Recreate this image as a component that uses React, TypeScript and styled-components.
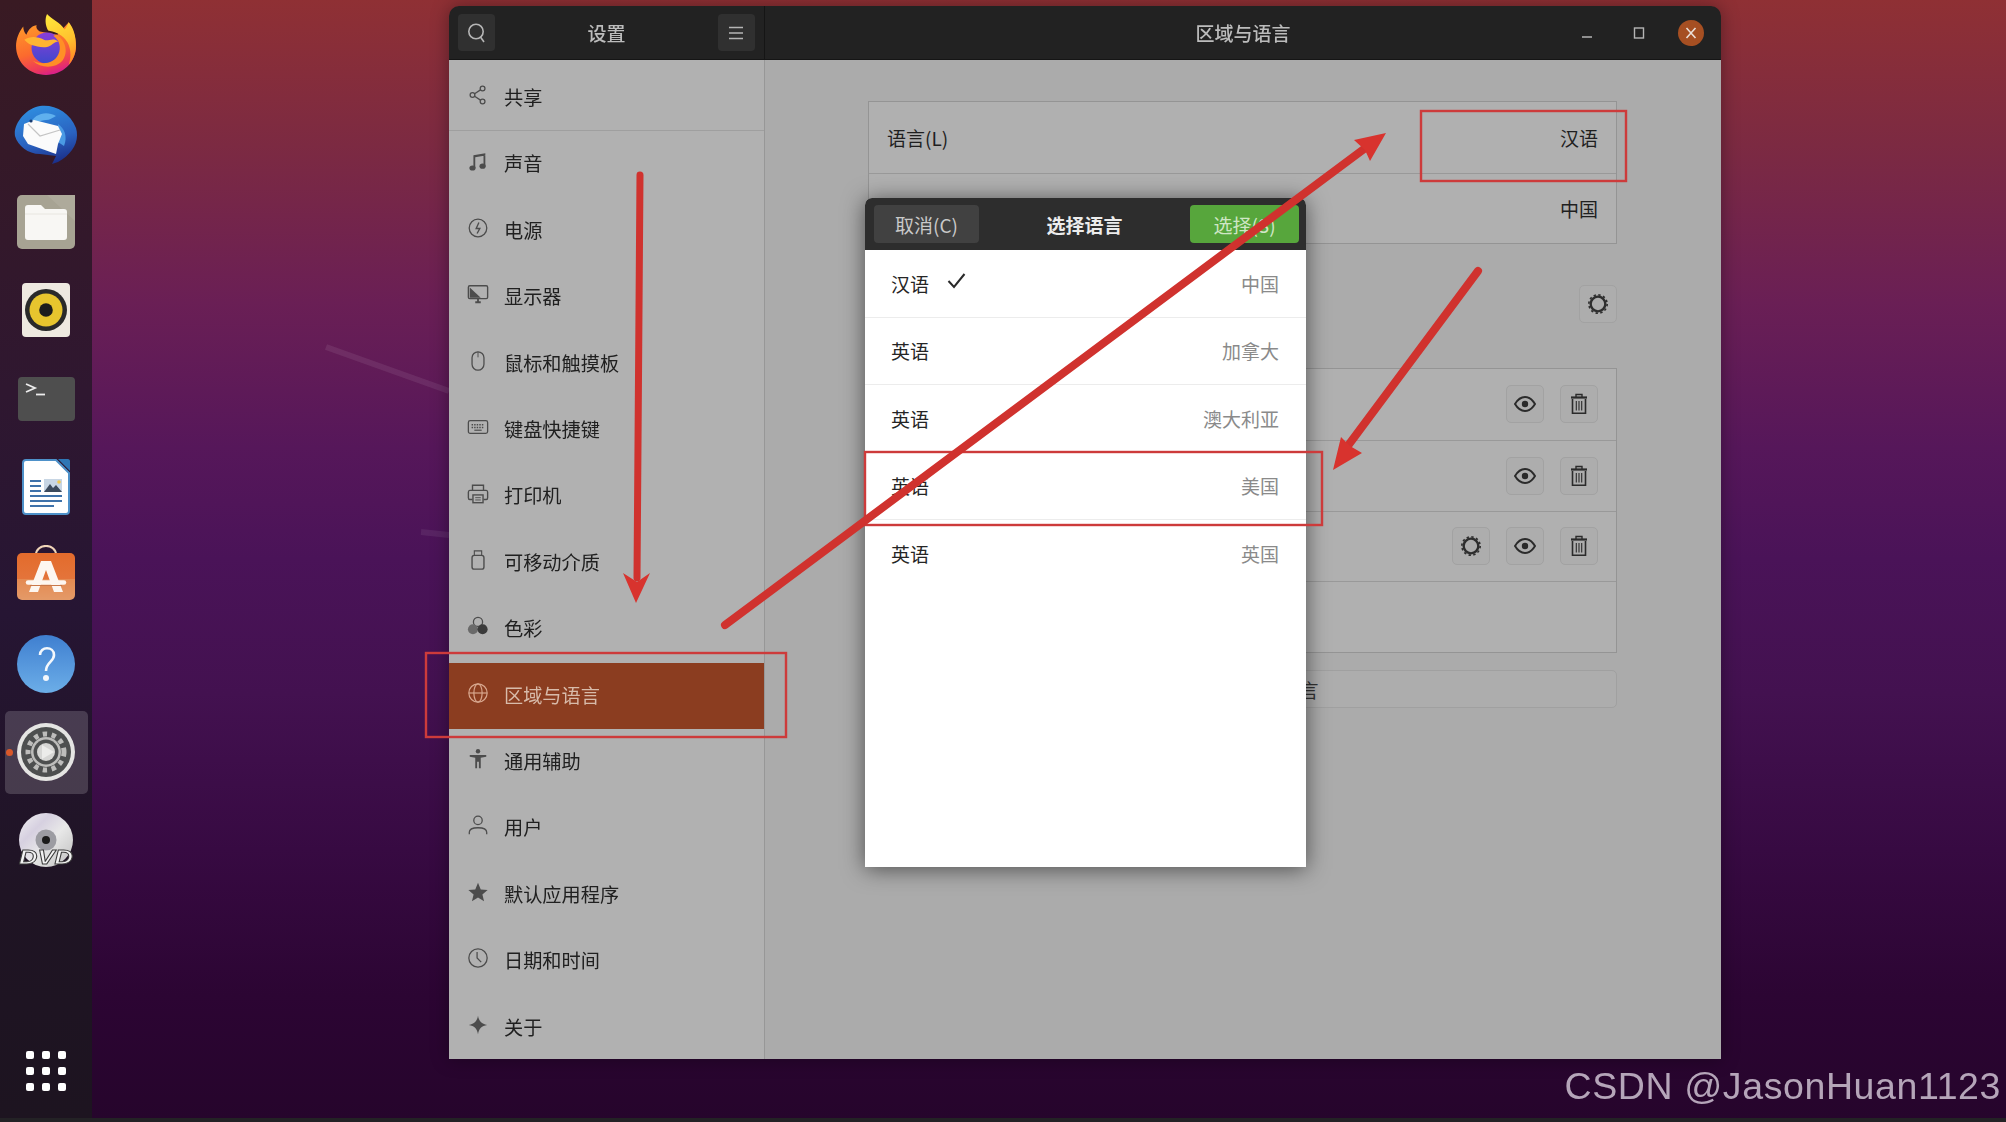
import React from "react";
import styled, { createGlobalStyle } from "styled-components";

const Global = createGlobalStyle`
  html, body { margin: 0; padding: 0; width: 2006px; height: 1122px; overflow: hidden; background: #222; }
  * { box-sizing: border-box; }
  body { font-family: "Noto Sans CJK SC", "Noto Sans", sans-serif; }
`;

const Page = styled.div`
  position: relative;
  width: 2006px;
  height: 1122px;
  display: grid;
  grid-template-rows: 1118px 4px;
  overflow: hidden;
`;
const Desktop = styled.div`
  display: flex;
  background: linear-gradient(180deg, #8f3034 0%, #7c2a42 13%, #6a1f55 27%, #56175a 40%, #4a1358 50%, #431150 62%, #370a42 76%, #2c0533 89%, #26052c 100%);
`;
const Strip = styled.div`
  background: #232225;
`;
const Dock = styled.nav`
  width: 92px;
  height: 100%;
  flex: none;
  display: flex;
  flex-direction: column;
  align-items: center;
  padding: 1px 0 27px;
  background: linear-gradient(180deg, #391a23 0%, #2f1730 35%, #261533 55%, #1f1424 80%, #1d1420 100%);
  filter: blur(0.4px);
`;
const Slot = styled.div<{ $active?: boolean }>`
  position: relative;
  width: 83px;
  height: 88.4px;
  flex: none;
  display: flex;
  align-items: center;
  justify-content: center;
  &::before {
    content: "";
    display: ${(p) => (p.$active ? "block" : "none")};
    position: absolute;
    inset: 3px 0;
    border-radius: 5px;
    background: rgba(255, 255, 255, 0.17);
  }
  &::after {
    content: "";
    display: ${(p) => (p.$active ? "block" : "none")};
    position: absolute;
    left: 1px;
    top: 41px;
    width: 7px;
    height: 7px;
    border-radius: 50%;
    background: #d9582a;
  }
  svg { position: relative; z-index: 1; }
`;
const AppGrid = styled.div`
  margin-top: auto;
  display: grid;
  grid-template-columns: repeat(3, 8px);
  gap: 8px;
`;
const AppDot = styled.span`
  width: 8px;
  height: 8px;
  border-radius: 2px;
  background: #fff;
`;
const Stage = styled.div`
  flex: 1;
  min-width: 0;
  display: flex;
  padding: 6px 285px 59px 357px;
`;
const Window = styled.section`
  position: relative;
  flex: 1;
  min-width: 0;
  display: flex;
  flex-direction: column;
  border-radius: 10px 10px 0 0;
  overflow: hidden;
  box-shadow: 0 0 18px rgba(0, 0, 0, 0.35);
  filter: blur(0.4px);
`;
const TitleBar = styled.header`
  height: 54px;
  flex: none;
  display: flex;
  background: #222222;
  border-bottom: 1px solid #151515;
  color: #b9b9b9;
`;
const SideHead = styled.div`
  width: 316px;
  flex: none;
  display: flex;
  align-items: center;
  justify-content: space-between;
  padding: 0 9px;
  border-right: 1px solid #151515;
`;
const HeadButton = styled.button`
  width: 37px;
  height: 37px;
  padding: 0;
  border: 0;
  border-radius: 4px;
  background: #303030;
  display: flex;
  align-items: center;
  justify-content: center;
`;
const TitleText = styled.span`
  font-size: 19px;
  font-weight: 500;
  line-height: 1;
  color: #bcbcbc;
  white-space: nowrap;
`;
const MainHead = styled.div`
  position: relative;
  flex: 1;
  min-width: 0;
  display: flex;
  align-items: center;
  justify-content: center;
`;
const WinControls = styled.div`
  position: absolute;
  right: 17px;
  top: 14px;
  display: flex;
  align-items: center;
  gap: 26px;
`;
const WinControl = styled.span<{ $close?: boolean }>`
  width: 26px;
  height: 26px;
  border-radius: 50%;
  display: flex;
  align-items: center;
  justify-content: center;
  background: ${(p) => (p.$close ? "#a64f22" : "transparent")};
`;
const Body = styled.div`
  flex: 1;
  display: flex;
  min-height: 0;
`;
const Sidebar = styled.aside`
  width: 316px;
  flex: none;
  padding-top: 5px;
  background: #b1b1b1;
  border-right: 1px solid #979797;
  overflow: hidden;
`;
const SideRow = styled.div<{ $selected?: boolean; $divider?: boolean }>`
  height: 66.4px;
  display: flex;
  align-items: center;
  gap: 15px;
  padding-left: 18px;
  font-size: 19.2px;
  line-height: 1;
  color: ${(p) => (p.$selected ? "#d8bbaa" : "#202020")};
  background: ${(p) => (p.$selected ? "#8b3d20" : "transparent")};
  border-bottom: 1px solid ${(p) => (p.$divider ? "#9f9f9f" : "transparent")};
`;
const SideIcon = styled.span<{ $selected?: boolean }>`
  width: 22px;
  height: 22px;
  flex: none;
  margin-top: -5px;
  color: ${(p) => (p.$selected ? "#d8a78e" : "#4c4c4c")};
  svg { display: block; width: 22px; height: 22px; }
`;
const Main = styled.main`
  position: relative;
  flex: 1;
  min-width: 0;
  padding: 41px 104px 0 103px;
  background: #ababab;
`;
const Panel = styled.div`
  background: #b0b0b0;
  border: 1px solid #949494;
`;
const FormRow = styled.div`
  height: 70.5px;
  display: flex;
  align-items: center;
  justify-content: space-between;
  padding: 0 18px;
  font-size: 19px;
  line-height: 1;
  color: #1f1f1f;
  & + & { border-top: 1px solid #999999; }
`;
const ActionRow = styled.div`
  height: 70.75px;
  display: flex;
  align-items: center;
  justify-content: flex-end;
  gap: 16px;
  padding-right: 18px;
  & + & { border-top: 1px solid #999999; }
`;
const IconButton = styled.button`
  width: 38px;
  height: 38px;
  padding: 0;
  border: 1px solid #a2a2a2;
  border-radius: 5px;
  background: #adadad;
  display: flex;
  align-items: center;
  justify-content: center;
  color: #2e2e2e;
`;
const GearRow = styled.div`
  display: flex;
  justify-content: flex-end;
  margin: 41px 0 45px;
`;
const ManageButton = styled.button`
  display: block;
  width: 100%;
  height: 38px;
  margin-top: 17px;
  border: 1px solid #a0a0a0;
  border-radius: 5px;
  background: #adadad;
  font: inherit;
  font-size: 19px;
  line-height: 1;
  color: #333;
`;
const Dialog = styled.div`
  position: absolute;
  left: 100px;
  top: 138px;
  width: 441px;
  height: 669px;
  display: flex;
  flex-direction: column;
  background: #fff;
  border-radius: 7px 7px 0 0;
  box-shadow: 0 2px 22px rgba(0, 0, 0, 0.55);
  overflow: hidden;
`;
const DialogHead = styled.div`
  height: 52px;
  flex: none;
  display: flex;
  align-items: center;
  justify-content: space-between;
  padding: 0 7px 0 9px;
  background: #2d2d2d;
`;
const DialogButton = styled.button<{ $primary?: boolean }>`
  width: ${(p) => (p.$primary ? "109px" : "105px")};
  height: 38px;
  padding: 0;
  border: 0;
  border-radius: 4px;
  font: inherit;
  font-size: 19px;
  line-height: 1;
  color: ${(p) => (p.$primary ? "#cfe6c5" : "#c9c9c9")};
  background: ${(p) => (p.$primary ? "#57a63c" : "#414141")};
`;
const DialogTitle = styled.span`
  font-size: 19px;
  font-weight: 700;
  line-height: 1;
  color: #ececec;
`;
const LangRow = styled.div<{ $plain?: boolean }>`
  height: 67.5px;
  flex: none;
  display: flex;
  align-items: center;
  padding: 0 27px 0 26px;
  font-size: 19px;
  line-height: 1;
  color: #252525;
  border-bottom: 1px solid ${(p) => (p.$plain ? "transparent" : "#ececec")};
`;
const Region = styled.span`
  margin-left: auto;
  color: #8a8a8a;
`;
const Check = styled.span`
  margin-left: 18px;
  margin-top: -4px;
  height: 20px;
  color: #2a2a2a;
`;
const Overlay = styled.svg`
  position: absolute;
  left: 0;
  top: 0;
  z-index: 10;
  pointer-events: none;
`;
const Watermark = styled.div`
  position: absolute;
  right: 5px;
  top: 1064px;
  z-index: 11;
  font-family: "Liberation Sans", Arial, sans-serif;
  font-size: 37.5px;
  line-height: 44px;
  letter-spacing: 0.6px;
  color: #b5a5b9;
  white-space: nowrap;
`;
const Streaks = styled.svg`
  position: absolute;
  left: 0;
  top: 0;
  z-index: 0;
  pointer-events: none;
`;
const Layer = styled.div`
  position: relative;
  z-index: 1;
  display: flex;
  width: 100%;
  min-width: 0;
`;
const RaisedIcon = styled.svg`
  margin-top: -7px;
`;

const Firefox = () => (
  <svg width="60" height="62" viewBox="0 0 58 60">
    <defs>
      <linearGradient id="ffb" x1="0.2" y1="0" x2="0.55" y2="1">
        <stop offset="0" stopColor="#ff9a2a" />
        <stop offset="0.55" stopColor="#fb6a2e" />
        <stop offset="0.85" stopColor="#ee3a5a" />
        <stop offset="1" stopColor="#d8208a" />
      </linearGradient>
      <linearGradient id="ffy" x1="0.3" y1="0" x2="0.6" y2="1">
        <stop offset="0" stopColor="#ffe53a" />
        <stop offset="0.6" stopColor="#ffc02e" />
        <stop offset="1" stopColor="#ff8a24" />
      </linearGradient>
      <linearGradient id="ffp" x1="0.5" y1="0" x2="0.5" y2="1">
        <stop offset="0" stopColor="#8a3ed8" />
        <stop offset="1" stopColor="#3f48cc" />
      </linearGradient>
    </defs>
    <path d="M29 59C13 59 0 47 0 31C0 24 3 17 7 12C7 15 8 18 10 20C12 15 16 11 20 11C19 13 20 15 23 17L40 20L51 8C55 14 58 22 58 31C58 47 45 59 29 59Z" fill="url(#ffb)" />
    <path d="M30 0C34 5 43 8 47 15C49 13 50 10 51 8C56 14 58 22 58 31C58 38 55 45 51 49C54 41 53 31 48 25C44 19 36 17 31 16C28 10 28 4 30 0Z" fill="url(#ffy)" />
    <circle cx="30" cy="33" r="15" fill="url(#ffp)" />
    <path d="M39 20C48 25 51 37 45 45C38 53 24 53 16 45C25 50 37 48 41 39C44 32 42 25 36 21Z" fill="#ff8f26" />
    <path d="M8 25C14 21 21 22 27 25C31 27 36 22 41 27C37 26 35 31 30 32C24 33 20 31 15 30C12 29 10 27 8 25Z" fill="#ffb432" />
  </svg>
);
const Thunderbird = () => (
  <svg width="64" height="60" viewBox="0 0 64 60">
    <defs>
      <linearGradient id="tb" x1="0.3" y1="0" x2="0.6" y2="1">
        <stop offset="0" stopColor="#2f8ee0" />
        <stop offset="0.6" stopColor="#2a62c0" />
        <stop offset="1" stopColor="#1b2f8a" />
      </linearGradient>
    </defs>
    <path d="M26 2C40 0 56 8 62 24C66 38 58 50 44 58L38 60L42 52L26 50C14 50 4 42 1 32C-1 20 12 4 26 2Z" fill="url(#tb)" />
    <path d="M16 20C20 10 32 6 42 12C38 14 36 16 32 16C26 16 20 20 16 20Z" fill="#5fb0ee" />
    <path d="M44 20C50 24 54 32 50 42L44 38Z" fill="#4a9ae4" />
    <path d="M9 32L10 20L20 16L44 22L48 30L44 40L42 50L14 40Z" fill="#fbfbfb" />
    <path d="M14 20L26 32L46 26" fill="none" stroke="#c4c4c4" strokeWidth="1.2" />
    <circle cx="17" cy="17" r="1.6" fill="#173a70" />
  </svg>
);
const Files = () => (
  <svg width="58" height="54" viewBox="0 0 58 54">
    <rect width="58" height="54" rx="5" fill="#a7a393" />
    <path d="M30 0H58V26Z" fill="#aeaa9b" />
    <path d="M8 13C8 11 9 10 11 10H24L28 14H47C49 14 50 15 50 17V42C50 44 49 45 47 45H11C9 45 8 44 8 42Z" fill="#f8f7f4" />
    <path d="M8 19H50" stroke="#e8e6e0" strokeWidth="1" />
  </svg>
);
const Rhythmbox = () => (
  <svg width="48" height="54" viewBox="0 0 48 54">
    <rect width="48" height="54" rx="4" fill="#eee9e0" />
    <circle cx="24" cy="27" r="21" fill="#2a2a2a" />
    <circle cx="24" cy="27" r="16.5" fill="#e7c52e" />
    <circle cx="24" cy="27" r="6.8" fill="#1d1d1d" />
  </svg>
);
const Terminal = () => (
  <svg width="57" height="44" viewBox="0 0 57 44">
    <rect width="57" height="44" rx="4" fill="#4e4e4e" />
    <path d="M8 7L17 11L8 15" fill="none" stroke="#ececec" strokeWidth="1.8" />
    <path d="M18 17.5H27" stroke="#ececec" strokeWidth="1.8" />
  </svg>
);
const Writer = () => (
  <svg width="48" height="56" viewBox="0 0 48 56">
    <path d="M36 0H46C47 0 48 1 48 2V12Z" fill="#2e76b5" />
    <path d="M4 1H34L47 14V52C47 54 46 55 44 55H4C2 55 1 54 1 52V4C1 2 2 1 4 1Z" fill="#fff" stroke="#4e91c9" strokeWidth="2" />
    <g stroke="#3e72aa" strokeWidth="2">
      <path d="M8 22H19M8 27H19M8 32H19M8 37H40M8 42H40M8 47H32" />
    </g>
    <rect x="22" y="20" width="18" height="13" fill="#c8d6e4" />
    <path d="M22 33L28 25L31 29L34 26L40 33Z" fill="#3c4a5c" />
    <circle cx="37" cy="23" r="1.8" fill="#f0c850" />
  </svg>
);
const AppStore = () => (
  <RaisedIcon width="58" height="55" viewBox="0 0 58 55">
    <defs>
      <linearGradient id="as" x1="0" y1="0" x2="0" y2="1">
        <stop offset="0" stopColor="#e36b2c" />
        <stop offset="0.55" stopColor="#e4743a" />
        <stop offset="0.56" stopColor="#e48a52" />
        <stop offset="1" stopColor="#e49a68" />
      </linearGradient>
    </defs>
    <path d="M19 10C19 -2 39 -2 39 10" fill="none" stroke="#f0d5b8" strokeWidth="2.2" />
    <rect y="8" width="58" height="47" rx="5" fill="url(#as)" />
    <path d="M24 16H34L46 47H37L29 25L21 47H12Z" fill="#fdf6f0" />
    <path d="M11 37.5H47" stroke="#fdf6f0" strokeWidth="4.5" strokeLinecap="round" />
    <path d="M13 40.5H45" stroke="#c9784a" strokeWidth="1" />
  </RaisedIcon>
);
const Help = () => (
  <svg width="58" height="58" viewBox="0 0 58 58">
    <defs>
      <linearGradient id="hp" x1="0" y1="0" x2="0" y2="1">
        <stop offset="0" stopColor="#3f7fd0" />
        <stop offset="1" stopColor="#6caee8" />
      </linearGradient>
    </defs>
    <circle cx="29" cy="29" r="29" fill="url(#hp)" />
    <path d="M23 20C23 11 37 11 37 20C37 27 29 27 29 36" fill="none" stroke="#f4f8fc" strokeWidth="2.6" />
    <circle cx="29" cy="43" r="3" fill="#f4f8fc" />
  </svg>
);
const SettingsLogo = () => (
  <svg width="58" height="58" viewBox="0 0 58 58">
    <circle cx="29" cy="29" r="29" fill="#e5e5e3" />
    <circle cx="29" cy="29" r="25" fill="#4d4f4f" />
    <circle cx="29" cy="29" r="18" fill="none" stroke="#bdbdbb" strokeWidth="5" strokeDasharray="4.4 4.6" />
    <circle cx="29" cy="29" r="15" fill="#bdbdbb" />
    <circle cx="29" cy="29" r="12.5" fill="#4d4f4f" />
    <circle cx="29" cy="29" r="9" fill="#d6d6d4" />
    <path d="M25 22L37 29L25 36Z" fill="#ececea" />
  </svg>
);
const Dvd = () => (
  <svg width="60" height="56" viewBox="0 0 60 56">
    <defs>
      <linearGradient id="dv" x1="0" y1="0" x2="1" y2="1">
        <stop offset="0" stopColor="#f2f2f2" />
        <stop offset="0.3" stopColor="#d6d0e0" />
        <stop offset="0.55" stopColor="#e8e8e8" />
        <stop offset="1" stopColor="#bdbdbd" />
      </linearGradient>
    </defs>
    <circle cx="30" cy="27" r="27" fill="url(#dv)" />
    <circle cx="30" cy="27" r="10.5" fill="#9c9ca2" />
    <circle cx="30" cy="27" r="4" fill="#1b1b1b" />
    <text x="3" y="51" fontFamily="'Liberation Sans', sans-serif" fontStyle="italic" fontWeight="700" fontSize="21" fill="#f2f2f2" stroke="#3a3a3a" strokeWidth="0.9" textLength="54" lengthAdjust="spacingAndGlyphs">DVD</text>
  </svg>
);

const Gear = ({ size = 22 }: { size?: number }) => (
  <svg width={size} height={size} viewBox="0 0 24 24" fill="none" stroke="currentColor">
    <circle cx="12" cy="12" r="8" strokeWidth="2.6" />
    <circle cx="12" cy="12" r="10" strokeWidth="1.8" strokeDasharray="2.6 2.64" />
  </svg>
);
const Eye = () => (
  <svg width="22" height="16" viewBox="0 0 22 16">
    <path d="M1 8C4 3 7 1 11 1C15 1 18 3 21 8C18 13 15 15 11 15C7 15 4 13 1 8Z" fill="none" stroke="#2b2b2b" strokeWidth="2" />
    <circle cx="11" cy="8" r="3.2" fill="#2b2b2b" />
  </svg>
);
const Trash = () => (
  <svg width="18" height="22" viewBox="0 0 18 22" fill="none" stroke="#2b2b2b">
    <path d="M1 4.5H17" strokeWidth="2.2" />
    <path d="M6 4V1.5H12V4" strokeWidth="1.4" />
    <path d="M2.5 6V20.2H15.5V6" strokeWidth="1.6" />
    <path d="M6.3 8V17.5M9 8V17.5M11.7 8V17.5" strokeWidth="1.1" />
  </svg>
);

const icons: Record<string, React.ReactNode> = {
  share: (
    <svg viewBox="0 0 24 24" fill="none" stroke="currentColor" strokeWidth="1.4">
      <circle cx="6" cy="12" r="2.6" /><circle cx="17" cy="5" r="2.6" /><circle cx="17" cy="19" r="2.6" />
      <path d="M8.3 10.7L14.7 6.4M8.3 13.3L14.7 17.6" />
    </svg>
  ),
  music: (
    <svg viewBox="0 0 24 24" fill="currentColor">
      <path d="M7 4.5L20 2.5V5L9 6.7V18.5H7ZM18 4H20V16.5H18Z" />
      <ellipse cx="6" cy="18.5" rx="3.4" ry="2.8" /><ellipse cx="17" cy="16.5" rx="3.4" ry="2.8" />
    </svg>
  ),
  power: (
    <svg viewBox="0 0 24 24" fill="none" stroke="currentColor" strokeWidth="1.4">
      <circle cx="12" cy="12" r="9.6" />
      <path d="M13 6L10 12.5H14L11 18" fill="none" strokeWidth="1.5" />
    </svg>
  ),
  display: (
    <svg viewBox="0 0 24 24" fill="none" stroke="currentColor" strokeWidth="1.5">
      <rect x="1.5" y="3" width="21" height="14" rx="1.5" />
      <path d="M3 5L15 16H3Z" fill="currentColor" stroke="none" />
      <path d="M9 21H15M12 17V21" strokeWidth="2" />
    </svg>
  ),
  mouse: (
    <svg viewBox="0 0 24 24" fill="none" stroke="currentColor" strokeWidth="1.4">
      <rect x="5.5" y="2" width="13" height="20" rx="6.5" />
      <path d="M12 2V8" strokeWidth="1" />
    </svg>
  ),
  keyboard: (
    <svg viewBox="0 0 24 24" fill="none" stroke="currentColor" strokeWidth="1.4">
      <rect x="1.5" y="5" width="21" height="14" rx="2" />
      <path d="M5 9.5H19M5 12.5H19" strokeWidth="1.5" strokeDasharray="1.6 1.2" />
      <path d="M8 15.5H16" strokeWidth="1.3" />
    </svg>
  ),
  printer: (
    <svg viewBox="0 0 24 24" fill="none" stroke="currentColor" strokeWidth="1.5">
      <path d="M6 8V2.5H18V8" />
      <path d="M6 18H3C2 18 1.5 17 1.5 16V10C1.5 9 2 8 3 8H21C22 8 22.5 9 22.5 10V16C22.5 17 22 18 21 18H18" />
      <rect x="6.5" y="13" width="11" height="8.5" />
      <path d="M9 16H15M9 18.5H15" strokeWidth="1" />
    </svg>
  ),
  usb: (
    <svg viewBox="0 0 24 24" fill="none" stroke="currentColor" strokeWidth="1.5">
      <rect x="5.5" y="7" width="13" height="15" rx="2.5" />
      <path d="M8 7V2H16V7" strokeWidth="1.2" />
    </svg>
  ),
  color: (
    <svg viewBox="0 0 24 24">
      <circle cx="12" cy="7.5" r="5" fill="none" stroke="currentColor" strokeWidth="1.4" />
      <circle cx="6.5" cy="15.5" r="5.5" fill="#6a6a6a" />
      <circle cx="17" cy="15.5" r="5.5" fill="#3b3b3b" />
    </svg>
  ),
  globe: (
    <svg viewBox="0 0 24 24" fill="none" stroke="currentColor" strokeWidth="1.3">
      <circle cx="12" cy="12" r="10" />
      <ellipse cx="12" cy="12" rx="4.5" ry="10" />
      <path d="M2 12H22" />
    </svg>
  ),
  access: (
    <svg viewBox="0 0 24 24" fill="currentColor">
      <circle cx="12" cy="3.5" r="2.4" />
      <path d="M3 7.5H21V9.5L15 10.5V22H13V15H11V22H9V10.5L3 9.5Z" />
    </svg>
  ),
  user: (
    <svg viewBox="0 0 24 24" fill="none" stroke="currentColor" strokeWidth="1.4">
      <circle cx="12" cy="7" r="4.6" />
      <path d="M2.5 22V20C2.5 16.5 6.5 15 12 15C17.5 15 21.5 16.5 21.5 20V22" />
    </svg>
  ),
  star: (
    <svg viewBox="0 0 24 24" fill="currentColor">
      <path d="M12 2L15 9.2L22.5 9.8L16.8 14.7L18.6 22L12 18L5.4 22L7.2 14.7L1.5 9.8L9 9.2Z" />
    </svg>
  ),
  clock: (
    <svg viewBox="0 0 24 24" fill="none" stroke="currentColor" strokeWidth="1.4">
      <circle cx="12" cy="12" r="10" />
      <path d="M11 5.5V12L15.5 16.5" />
    </svg>
  ),
  spark: (
    <svg viewBox="0 0 24 24" fill="currentColor">
      <path d="M12 2C13 8 16 11 22 12C16 13 13 16 12 22C11 16 8 13 2 12C8 11 11 8 12 2Z" />
    </svg>
  ),
};

const sideItems = [
  ["share", "共享"], ["music", "声音"], ["power", "电源"], ["display", "显示器"],
  ["mouse", "鼠标和触摸板"], ["keyboard", "键盘快捷键"], ["printer", "打印机"], ["usb", "可移动介质"],
  ["color", "色彩"], ["globe", "区域与语言"], ["access", "通用辅助"], ["user", "用户"],
  ["star", "默认应用程序"], ["clock", "日期和时间"], ["spark", "关于"],
];
const languages = [
  ["汉语", "中国", true], ["英语", "加拿大", false], ["英语", "澳大利亚", false],
  ["英语", "美国", false], ["英语", "英国", false],
] as const;
const dockApps = [Firefox, Thunderbird, Files, Rhythmbox, Terminal, Writer, AppStore, Help, SettingsLogo, Dvd];

export default function App() {
  return (
    <Page>
      <Global />
      <Desktop>
        <Dock>
          {dockApps.map((Icon, i) => (
            <Slot key={i} $active={i === 8}><Icon /></Slot>
          ))}
          <AppGrid>
            {Array.from({ length: 9 }, (_, i) => <AppDot key={i} />)}
          </AppGrid>
        </Dock>
        <Stage>
          <Layer>
            <Window>
              <TitleBar>
                <SideHead>
                  <HeadButton>
                    <svg width="20" height="22" viewBox="0 0 20 22" fill="none" stroke="#b5b5b5" strokeWidth="1.6">
                      <circle cx="9" cy="9.5" r="7.2" /><path d="M13.5 15L17 20" />
                    </svg>
                  </HeadButton>
                  <TitleText>设置</TitleText>
                  <HeadButton>
                    <svg width="16" height="14" viewBox="0 0 16 14" stroke="#b5b5b5" strokeWidth="1.6">
                      <path d="M1 1.5H15M1 7H15M1 12.5H15" />
                    </svg>
                  </HeadButton>
                </SideHead>
                <MainHead>
                  <TitleText>区域与语言</TitleText>
                  <WinControls>
                    <WinControl>
                      <svg width="12" height="12" viewBox="0 0 12 12" stroke="#b5b5b5" strokeWidth="1.4"><path d="M1 10H11" /></svg>
                    </WinControl>
                    <WinControl>
                      <svg width="12" height="12" viewBox="0 0 12 12" fill="none" stroke="#b5b5b5" strokeWidth="1.4"><rect x="1.5" y="1" width="9" height="10" /></svg>
                    </WinControl>
                    <WinControl $close>
                      <svg width="12" height="12" viewBox="0 0 12 12" stroke="#eadfd8" strokeWidth="1.6"><path d="M1.5 1L10.5 11M10.5 1L1.5 11" /></svg>
                    </WinControl>
                  </WinControls>
                </MainHead>
              </TitleBar>
              <Body>
                <Sidebar>
                  {sideItems.map(([icon, label], i) => (
                    <SideRow key={label} $selected={i === 9} $divider={i === 0}>
                      <SideIcon $selected={i === 9}>{icons[icon]}</SideIcon>
                      {label}
                    </SideRow>
                  ))}
                </Sidebar>
                <Main>
                  <Panel>
                    <FormRow>语言(L)<span>汉语</span></FormRow>
                    <FormRow><span />中国</FormRow>
                  </Panel>
                  <GearRow>
                    <IconButton><Gear /></IconButton>
                  </GearRow>
                  <Panel>
                    <ActionRow>
                      <IconButton><Eye /></IconButton>
                      <IconButton><Trash /></IconButton>
                    </ActionRow>
                    <ActionRow>
                      <IconButton><Eye /></IconButton>
                      <IconButton><Trash /></IconButton>
                    </ActionRow>
                    <ActionRow>
                      <IconButton><Gear /></IconButton>
                      <IconButton><Eye /></IconButton>
                      <IconButton><Trash /></IconButton>
                    </ActionRow>
                    <ActionRow />
                  </Panel>
                  <ManageButton>管理已安装的语言</ManageButton>
                  <Dialog>
                    <DialogHead>
                      <DialogButton>取消(C)</DialogButton>
                      <DialogTitle>选择语言</DialogTitle>
                      <DialogButton $primary>选择(S)</DialogButton>
                    </DialogHead>
                    {languages.map(([lang, region, current], i) => (
                      <LangRow key={region} $plain={i === 4}>
                        {lang}
                        {current && (
                          <Check>
                            <svg width="19" height="17" viewBox="0 0 19 17" fill="none" stroke="currentColor" strokeWidth="2"><path d="M1.5 9L7 15L17.5 2" /></svg>
                          </Check>
                        )}
                        <Region>{region}</Region>
                      </LangRow>
                    ))}
                  </Dialog>
                </Main>
              </Body>
            </Window>
          </Layer>
        </Stage>
      </Desktop>
      <Strip />
      <Streaks width="2006" height="1122" viewBox="0 0 2006 1122">
        <path d="M326 347L449 391" stroke="#ffffff" strokeOpacity="0.08" strokeWidth="6" />
        <path d="M421 532L449 535" stroke="#ffffff" strokeOpacity="0.07" strokeWidth="6" />
      </Streaks>
      <Overlay width="2006" height="1122" viewBox="0 0 2006 1122">
        <g fill="none" stroke="#cd3b3b" strokeWidth="2.4">
          <rect x="1421" y="111" width="205" height="70" />
          <rect x="426" y="653" width="360" height="84" />
          <rect x="865" y="452" width="457" height="73" />
        </g>
        <g stroke="#d0322e" strokeLinecap="round" fill="none">
          <path d="M640 175L637 578" strokeWidth="7" />
          <path d="M725 625L1368 146" strokeWidth="8" />
          <path d="M1478 271L1347 447" strokeWidth="8" />
        </g>
        <g fill="#d8332e">
          <path d="M636 603L623 573L637 582L650 573Z" />
          <path d="M1386 133L1354 140L1365 150L1370 161Z" />
          <path d="M1333 470L1341 437L1350 446L1362 453Z" />
        </g>
      </Overlay>
      <Watermark>CSDN @JasonHuan1123</Watermark>
    </Page>
  );
}
